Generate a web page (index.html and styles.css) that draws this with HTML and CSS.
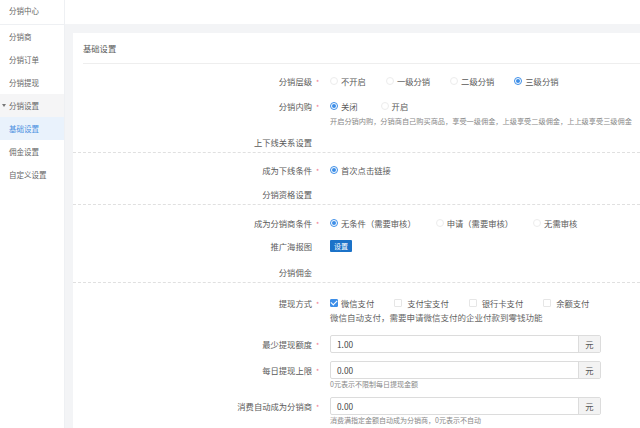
FILE: index.html
```html
<!DOCTYPE html>
<html lang="zh">
<head>
<meta charset="utf-8">
<title>基础设置</title>
<link rel="stylesheet" href="styles.css">
</head>
<body>
<div class="app">
  <aside class="sidebar">
    <div class="side-head">分销中心</div>
    <ul class="side-menu">
      <li class="side-item">分销商</li>
      <li class="side-item">分销订单</li>
      <li class="side-item">分销提现</li>
      <li class="side-item group"><span class="caret"></span>分销设置</li>
      <li class="side-item active">基础设置</li>
      <li class="side-item">佣金设置</li>
      <li class="side-item">自定义设置</li>
    </ul>
  </aside>
  <main class="main">
    <div class="topbar"></div>
    <div class="content">
      <section class="card">
        <div class="card-head">基础设置</div>
        <div class="card-body">
          <div class="field f1">
            <div class="label"><span class="ltext">分销层级</span><span class="req">*</span></div>
            <div class="control">
              <div class="opts">
                <span class="opt"><i class="radio"></i>不开启</span>
                <span class="opt"><i class="radio"></i>一级分销</span>
                <span class="opt"><i class="radio"></i>二级分销</span>
                <span class="opt"><i class="radio on"></i>三级分销</span>
              </div>
            </div>
          </div>
          <div class="field f2">
            <div class="label"><span class="ltext">分销内购</span><span class="req">*</span></div>
            <div class="control">
              <div class="opts wide">
                <span class="opt"><i class="radio on"></i>关闭</span>
                <span class="opt"><i class="radio"></i>开启</span>
              </div>
              <div class="help small first">开启分销内购，分销商自己购买商品，享受一级佣金，上级享受二级佣金，上上级享受三级佣金</div>
            </div>
          </div>
          <div class="section s1">
            <div class="label"><span class="ltext">上下线关系设置</span><span class="req"></span></div>
          </div>
          <div class="field f3">
            <div class="label"><span class="ltext">成为下线条件</span><span class="req">*</span></div>
            <div class="control">
              <div class="opts">
                <span class="opt"><i class="radio on"></i>首次点击链接</span>
              </div>
            </div>
          </div>
          <div class="section s2">
            <div class="label"><span class="ltext">分销资格设置</span><span class="req"></span></div>
          </div>
          <div class="field f4">
            <div class="label"><span class="ltext">成为分销商条件</span><span class="req">*</span></div>
            <div class="control">
              <div class="opts">
                <span class="opt"><i class="radio on"></i>无条件（需要审核）</span>
                <span class="opt"><i class="radio"></i>申请（需要审核）</span>
                <span class="opt"><i class="radio"></i>无需审核</span>
              </div>
            </div>
          </div>
          <div class="field f5">
            <div class="label"><span class="ltext">推广海报图</span><span class="req"></span></div>
            <div class="control">
              <button class="btn" type="button">设置</button>
            </div>
          </div>
          <div class="section s3">
            <div class="label"><span class="ltext">分销佣金</span><span class="req"></span></div>
          </div>
          <div class="field f6">
            <div class="label"><span class="ltext">提现方式</span><span class="req">*</span></div>
            <div class="control">
              <div class="opts">
                <span class="opt"><i class="check on"></i>微信支付</span>
                <span class="opt"><i class="check"></i>支付宝支付</span>
                <span class="opt"><i class="check"></i>银行卡支付</span>
                <span class="opt"><i class="check"></i>余额支付</span>
              </div>
              <div class="help normal">微信自动支付，需要申请微信支付的企业付款到零钱功能</div>
            </div>
          </div>
          <div class="field tall f7">
            <div class="label"><span class="ltext">最少提现额度</span><span class="req">*</span></div>
            <div class="control">
              <div class="igroup"><span class="ival">1.00</span><span class="addon">元</span></div>
            </div>
          </div>
          <div class="field tall f8">
            <div class="label"><span class="ltext">每日提现上限</span><span class="req">*</span></div>
            <div class="control">
              <div class="igroup"><span class="ival">0.00</span><span class="addon">元</span></div>
              <div class="help tiny">0元表示不限制每日提现金额</div>
            </div>
          </div>
          <div class="field tall f9">
            <div class="label"><span class="ltext">消费自动成为分销商</span><span class="req">*</span></div>
            <div class="control">
              <div class="igroup"><span class="ival">0.00</span><span class="addon">元</span></div>
              <div class="help tiny">消费满指定金额自动成为分销商，0元表示不自动</div>
            </div>
          </div>
        </div>
      </section>
    </div>
  </main>
</div>
</body>
</html>
```

FILE: styles.css
```css
* { box-sizing: border-box; }
html, body { margin: 0; padding: 0; }
body {
  width: 640px;
  height: 428px;
  overflow: hidden;
  background: #fff;
  font-family: "Noto Sans CJK SC", "Noto Sans", sans-serif;
  color: #555;
}
.app { display: flex; height: 428px; }

.sidebar {
  width: 65px;
  flex: none;
  background: #fff;
  border-right: 1px solid #eef0f3;
}
.side-head {
  height: 25px;
  line-height: 21px;
  padding-left: 9px;
  font-size: 7.5px;
  color: #666;
  border-bottom: 1px solid #eef0f3;
}
.side-menu { list-style: none; margin: 0; padding: 0; }
.side-item {
  height: 23px;
  line-height: 23px;
  padding-left: 9px;
  font-size: 7.5px;
  color: #666;
}
.side-item.group { background: #f5f5f6; padding-left: 2px; display: flex; align-items: center; }
.caret {
  width: 0; height: 0;
  border-left: 2px solid transparent;
  border-right: 2px solid transparent;
  border-top: 3px solid #777;
  margin-right: 3px;
}
.side-item.active { background: #e9f2fc; color: #4a8fe0; }

.main { flex: 1; background: #f3f4f6; display: flex; flex-direction: column; min-width: 0; }
.topbar { height: 24px; background: #fff; flex: none; }
.content { flex: 1; padding: 9px 0 0 8px; display: flex; }
.card { flex: 1; background: #fff; }
.card-head {
  height: 31px;
  line-height: 30px;
  margin-left: 10px;
  border-bottom: 1px solid #eeeeee;
  font-size: 8.3px;
  color: #5a5a5a;
}

.field { display: flex; align-items: flex-start; }
.label {
  width: 257px;
  flex: none;
  display: flex;
  justify-content: flex-end;
  font-size: 8.3px;
  line-height: 14px;
  height: 14px;
  color: #5a5a5a;
}
.req {
  width: 18px;
  height: 14px;
  padding-left: 4px;
  padding-top: 2px;
  line-height: 12px;
  color: #f07a8c;
  font-size: 7px;
}
.control { font-size: 8.3px; line-height: 14px; color: #5a5a5a; }

.opts { display: flex; gap: 20px; height: 14px; align-items: center; }
.opts.wide { gap: 23px; }
.opt { display: flex; align-items: center; gap: 3px; white-space: nowrap; }
.radio {
  width: 8px; height: 8px;
  border: 1px solid #ececec;
  border-radius: 50%;
  display: inline-flex;
  align-items: center;
  justify-content: center;
  flex: none;
}
.radio.on { border-color: #3d8ee8; }
.radio.on::after { content: ""; width: 4px; height: 4px; border-radius: 50%; background: #3d8ee8; }
.check {
  width: 8px; height: 8px;
  border: 1px solid #e6e6e6;
  border-radius: 1px;
  flex: none;
  display: inline-flex;
  align-items: center;
  justify-content: center;
}
.opt + .opt .check { margin-right: 2px; }
.check.on { background: #3d8ee8; border-color: #3d8ee8; }
.check.on::after {
  content: "";
  width: 3px; height: 5px;
  border-right: 1px solid #fff;
  border-bottom: 1px solid #fff;
  transform: translateY(-1px) rotate(45deg);
}

.help { color: #888; white-space: nowrap; }
.help.small { font-size: 7.2px; line-height: 12px; margin-top: 2px; }
.help.normal { font-size: 8.5px; line-height: 12px; margin-top: 1px; color: #666; }
.help.tiny { font-size: 7px; line-height: 10px; color: #888; }

.section { border-bottom: 1px dashed #e0e0e0; padding-bottom: 3px; }

.btn {
  border: 0;
  margin: 1px 0 0;
  padding: 0;
  width: 22px;
  height: 12px;
  line-height: 12px;
  background: #1b72c8;
  color: #fff;
  font-family: inherit;
  font-size: 7px;
  border-radius: 1px;
  display: block;
}

.tall .label { line-height: 18px; height: 18px; }
.tall .req { height: 18px; padding-top: 4px; }
.igroup {
  width: 271px;
  height: 18px;
  display: flex;
  border: 1px solid #dcdcdc;
  border-radius: 2px;
  overflow: hidden;
}
.ival { flex: 1; padding-left: 6px; line-height: 16px; font-size: 8.3px; color: #444; }
.addon {
  width: 22px;
  background: #f3f3f3;
  border-left: 1px solid #dcdcdc;
  text-align: center;
  line-height: 16px;
  font-size: 8.3px;
  color: #555;
}

.f1 { margin-top: 10px; }
.f2 { margin-top: 11px; }
.s1 { margin-top: 8px; }
.f3 { margin-top: 10px; }
.s2 { margin-top: 10px; }
.f4 { margin-top: 11px; }
.f5 { margin-top: 9px; }
.s3 { margin-top: 12px; }
.f6 { margin-top: 13px; }
.f7 { margin-top: 12px; }
.f8 { margin-top: 8px; }
.f9 { margin-top: 8px; }
```
